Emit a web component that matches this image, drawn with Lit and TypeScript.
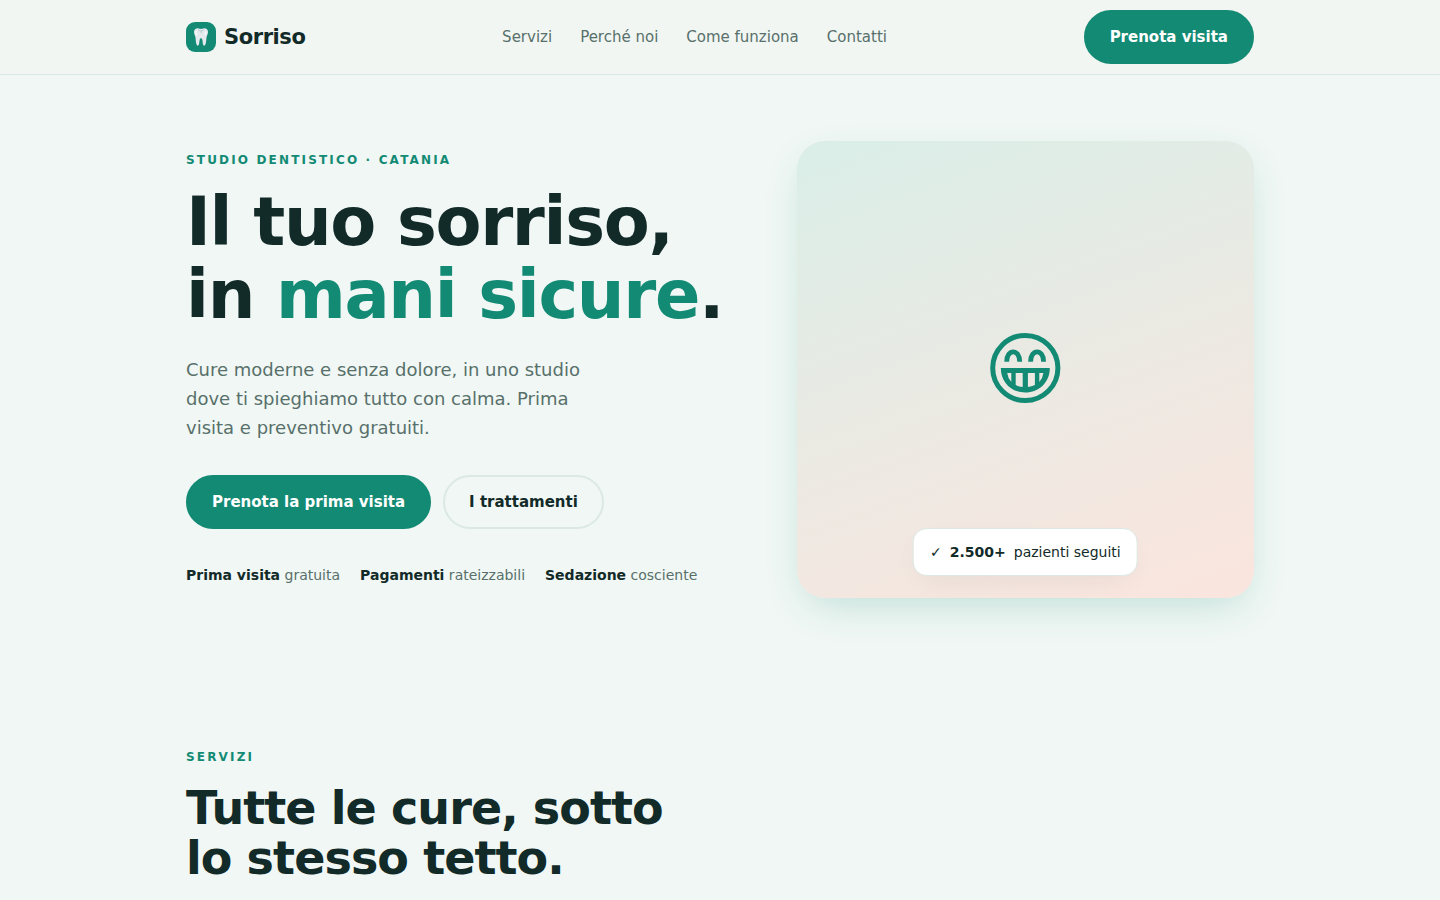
import { LitElement, html, css } from "lit";
import { customElement } from "lit/decorators.js";

@customElement("app-root")
export class AppRoot extends LitElement {
  static styles = css`
    :host {
      --ink: #122a28;
      --muted: #58706b;
      --teal: #138a74;
      --line: #dce8e4;
      --paper: #f0f7f4;
      display: block;
      height: 100vh;
      overflow: hidden;
      background: var(--paper);
      color: var(--ink);
      font: 16px/1.6 "DejaVu Sans", Verdana, sans-serif;
    }
    * { box-sizing: border-box; }
    h1, h2, p, ul { margin: 0; padding: 0; }
    a { color: inherit; text-decoration: none; }
    .wrap { max-width: 1120px; margin: 0 auto; padding: 0 26px; }
    .header { background: #f1f6f2; border-bottom: 1px solid #d8e9e5; }
    .bar {
      display: flex;
      align-items: center;
      justify-content: space-between;
      padding-top: 10px;
      padding-bottom: 10px;
    }
    .brand {
      display: flex;
      align-items: center;
      gap: 8px;
      font-size: 21px;
      line-height: 32px;
      font-weight: 700;
      letter-spacing: -0.02em;
    }
    .mark {
      display: grid;
      place-items: center;
      width: 30px;
      height: 30px;
      border-radius: 9px;
      background: var(--teal);
    }
    .tooth { width: 16px; height: 20px; }
    .nav { display: flex; gap: 28px; font-size: 15px; color: var(--muted); }
    .btn {
      display: inline-flex;
      align-items: center;
      border: 2px solid var(--teal);
      border-radius: 99px;
      padding: 13px 24px;
      background: var(--teal);
      color: #fff;
      font: 700 15px/24px "DejaVu Sans", Verdana, sans-serif;
      cursor: pointer;
    }
    .ghost { background: transparent; border-color: var(--line); color: var(--ink); }
    .hero {
      display: grid;
      grid-template-columns: 1.2fr 1fr;
      gap: 62px;
      align-items: center;
      padding-top: 66px;
      padding-bottom: 66px;
    }
    .eyebrow {
      font-size: 12px;
      line-height: 20px;
      font-weight: 700;
      letter-spacing: 0.18em;
      text-transform: uppercase;
      color: var(--teal);
    }
    .title {
      margin-top: 16px;
      font-size: 67px;
      line-height: 73px;
      letter-spacing: -0.02em;
      white-space: nowrap;
    }
    .accent { color: var(--teal); }
    .lead {
      margin-top: 23px;
      max-width: 430px;
      font-size: 18px;
      line-height: 29px;
      color: var(--muted);
    }
    .actions { display: flex; gap: 12px; margin-top: 33px; }
    .facts {
      display: flex;
      gap: 20px;
      margin-top: 35px;
      padding-bottom: 4px;
      list-style: none;
      font-size: 14px;
      line-height: 22px;
      color: var(--muted);
      white-space: nowrap;
    }
    .facts b { color: var(--ink); }
    .art {
      position: relative;
      display: grid;
      place-items: center;
      padding-bottom: 4px;
      aspect-ratio: 1;
      border-radius: 28px;
      background: linear-gradient(160deg, #daeee8, #fbe5de);
      box-shadow: 0 14px 40px -12px rgba(19, 138, 116, 0.26);
    }
    .smile { width: 72px; height: 72px; color: var(--teal); }
    .badge {
      position: absolute;
      bottom: 22px;
      left: 50%;
      transform: translateX(-50%);
      display: flex;
      gap: 8px;
      padding: 12px 16px;
      border: 1px solid var(--line);
      border-radius: 14px;
      background: #fff;
      box-shadow: 0 10px 30px -10px rgba(19, 42, 40, 0.08);
      font-size: 14px;
      line-height: 22px;
      white-space: nowrap;
    }
    .services { padding-top: 83px; }
    .subtitle {
      margin-top: 16px;
      max-width: 520px;
      font-size: 46px;
      line-height: 50px;
      letter-spacing: -0.02em;
    }
  `;

  render() {
    return html`
      <header class="header">
        <div class="wrap bar">
          <a class="brand" href="#top">
            <span class="mark">
              <svg class="tooth" viewBox="0 0 16 20" aria-hidden="true">
                <path fill="#e4eaee" d="M1 5C1 2.400 2.800 1.200 4.800 1.300 6 1.400 6.800 2 8 2s2-.6 3.200-.7C13.300 1.200 15 2.400 15 5c0 2.200-1.200 3.600-1.500 5.600-.3 2.300-.3 7.900-2.200 8.200-1.700.2-1.500-4-2-6-.3-1-.7-1.500-1.300-1.500s-1 .5-1.300 1.500c-.5 2-.3 6.200-2 6-1.900-.3-1.900-5.900-2.200-8.200C2.200 8.600 1 7.200 1 5Z"/>
                <path fill="none" stroke="#b4c5cc" stroke-width=".8" stroke-linecap="round" d="M5.500 3.200Q8 5 10.500 3.200M8.200 4.100v1.600"/>
                <path fill="none" stroke="#fff" stroke-linecap="round" d="M3 3.900Q2.300 6 3.700 8M12.700 4.500q.4 1.400-.5 3.200"/>
              </svg>
            </span>
            <span>Sorriso</span>
          </a>
          <nav class="nav" aria-label="Principale">
            <a href="#servizi">Servizi</a>
            <a href="#perche">Perché noi</a>
            <a href="#come">Come funziona</a>
            <a href="#contatti">Contatti</a>
          </nav>
          <button class="btn" type="button">Prenota visita</button>
        </div>
      </header>
      <main id="top">
        <section class="wrap hero">
          <div>
            <p class="eyebrow">Studio dentistico · Catania</p>
            <h1 class="title">Il tuo sorriso,<br />in <span class="accent">mani sicure</span>.</h1>
            <p class="lead">Cure moderne e senza dolore, in uno studio dove ti spieghiamo tutto con calma. Prima visita e preventivo gratuiti.</p>
            <div class="actions">
              <button class="btn" type="button">Prenota la prima visita</button>
              <button class="btn ghost" type="button">I trattamenti</button>
            </div>
            <ul class="facts">
              <li><b>Prima visita</b> gratuita</li>
              <li><b>Pagamenti</b> rateizzabili</li>
              <li><b>Sedazione</b> cosciente</li>
            </ul>
          </div>
          <div class="art">
            <svg class="smile" viewBox="0 0 72 72" fill="none" stroke="currentColor" role="img" aria-label="Sorriso">
              <circle cx="36.300" cy="36" r="32.600" stroke-width="5"/>
              <path stroke-width="4.800" d="M17.700 29.700C17.700 16.500 30.700 16.500 30.700 29.700M41.600 29.700C41.600 16.500 54.600 16.500 54.600 29.700"/>
              <path fill="currentColor" fill-rule="evenodd" stroke="none" d="M11.800 36H60.800C60.800 50.500 50 60.500 36.300 60.500S11.800 50.500 11.800 36ZM18.200 41H22.300V50Q18.800 46 18.200 41ZM26.700 41H33.700V55Q30 54.700 26.700 53ZM38.900 41H45.900V53Q42.600 54.700 38.900 55ZM50.300 41H54.400Q53.800 46 50.300 50Z"/>
            </svg>
            <div class="badge"><span>✓</span><b>2.500+</b><span>pazienti seguiti</span></div>
          </div>
        </section>
        <section class="wrap services" id="servizi">
          <p class="eyebrow">Servizi</p>
          <h2 class="subtitle">Tutte le cure, sotto lo stesso tetto.</h2>
        </section>
      </main>
    `;
  }
}
